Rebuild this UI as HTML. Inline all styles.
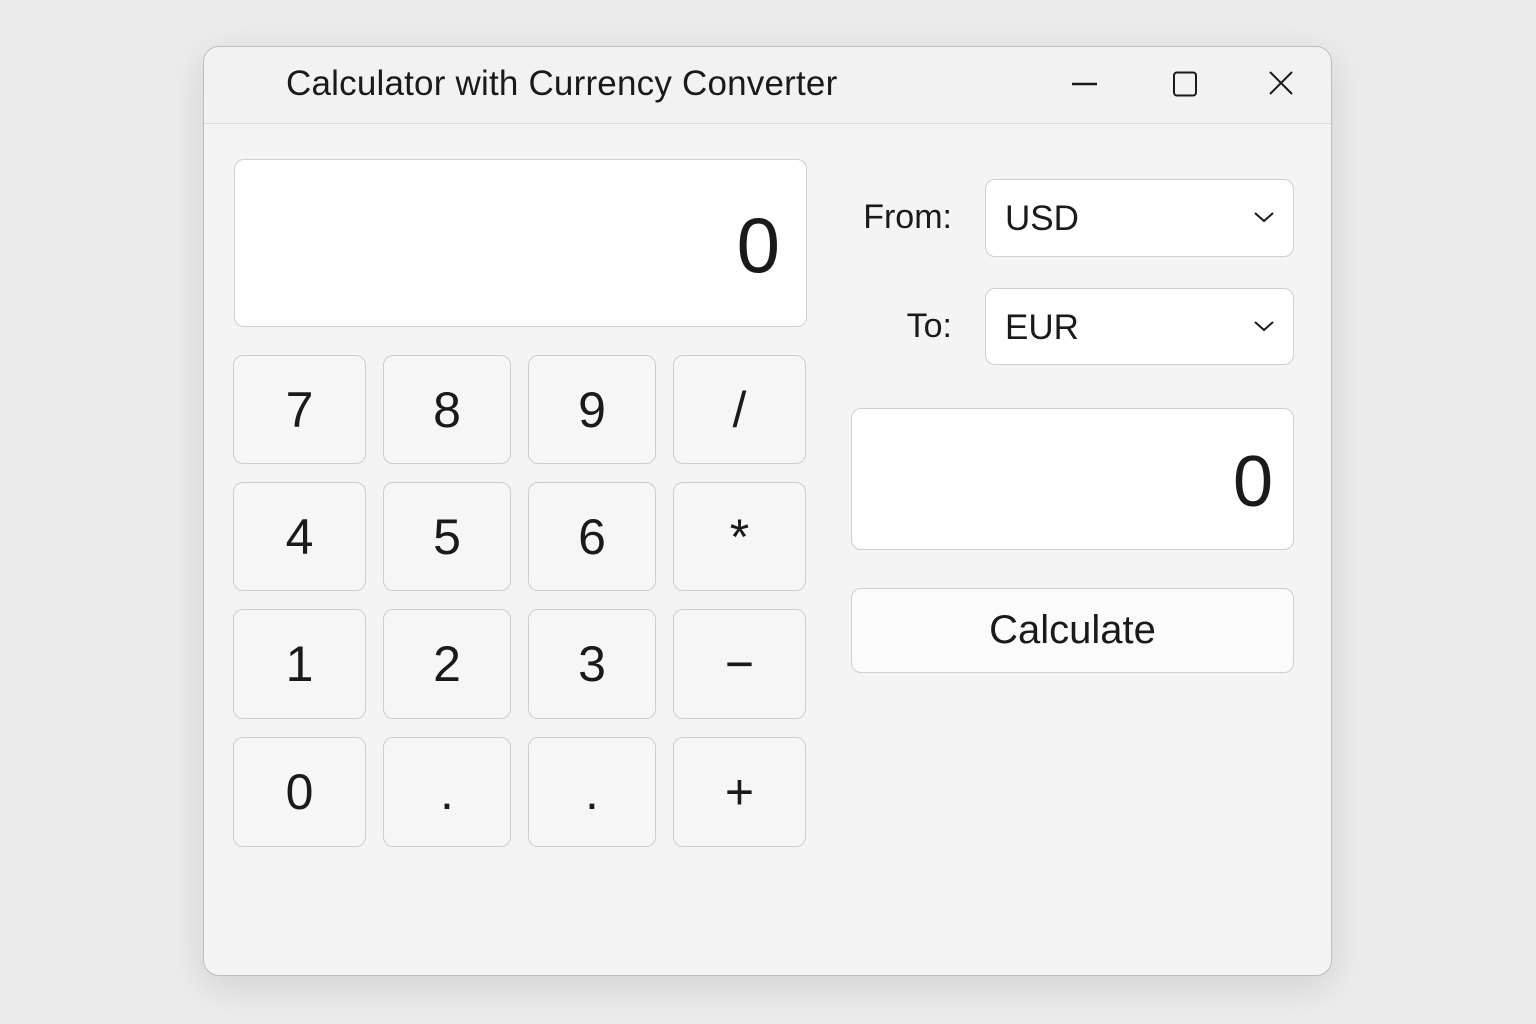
<!DOCTYPE html>
<html><head><style>
*{box-sizing:border-box;margin:0;padding:0}
body{width:1536px;height:1024px;background:#ececec;font-family:"Liberation Sans",sans-serif;color:#1a1a1a;position:relative;overflow:hidden}
.win{position:absolute;left:203px;top:46px;width:1129px;height:930px;background:#f4f4f4;border:1px solid #bdbdbd;border-radius:16px;box-shadow:0 10px 40px rgba(0,0,0,.12);overflow:hidden}
.tb{position:absolute;left:0;top:0;width:100%;height:77px;background:#f2f2f2;border-bottom:1px solid #dcdcdc}
.title{position:absolute;left:82px;top:17px;font-size:35px;letter-spacing:0.2px}
.a{position:absolute}
.box{position:absolute;background:#fff;border:1.5px solid #cfcfcf;border-radius:10px}
.k{position:absolute;background:#f6f6f6;border:1.5px solid #cdcdcd;border-radius:10px;display:flex;align-items:center;justify-content:center;font-size:50px}
.lbl{position:absolute;font-size:34px;text-align:right}
</style></head><body>
<div class="win">
 <div class="tb">
  <div class="title">Calculator with Currency Converter</div>
  <svg class="a" style="left:860px;top:22px" width="40" height="30"><line x1="8" y1="15" x2="33" y2="15" stroke="#1a1a1a" stroke-width="2.5"/></svg>
  <svg class="a" style="left:966px;top:22px" width="30" height="30"><rect x="4" y="3.5" width="22" height="23" rx="3" fill="none" stroke="#1a1a1a" stroke-width="2"/></svg>
  <svg class="a" style="left:1062px;top:22px" width="30" height="30"><path d="M4 3L26 25M26 3L4 25" stroke="#1a1a1a" stroke-width="2"/></svg>
 </div>
 <div class="box" style="left:30px;top:112px;width:573px;height:168px"><div class="a" style="right:26px;top:40px;font-size:78px">0</div></div>
</div>
<div class="k" style="left:233px;top:355px;width:133px;height:109px">7</div>
<div class="k" style="left:383px;top:355px;width:128px;height:109px">8</div>
<div class="k" style="left:528px;top:355px;width:128px;height:109px">9</div>
<div class="k" style="left:673px;top:355px;width:133px;height:109px">/</div>
<div class="k" style="left:233px;top:482px;width:133px;height:109px">4</div>
<div class="k" style="left:383px;top:482px;width:128px;height:109px">5</div>
<div class="k" style="left:528px;top:482px;width:128px;height:109px">6</div>
<div class="k" style="left:673px;top:482px;width:133px;height:109px">*</div>
<div class="k" style="left:233px;top:609px;width:133px;height:110px">1</div>
<div class="k" style="left:383px;top:609px;width:128px;height:110px">2</div>
<div class="k" style="left:528px;top:609px;width:128px;height:110px">3</div>
<div class="k" style="left:673px;top:609px;width:133px;height:110px">−</div>
<div class="k" style="left:233px;top:737px;width:133px;height:110px">0</div>
<div class="k" style="left:383px;top:737px;width:128px;height:110px">.</div>
<div class="k" style="left:528px;top:737px;width:128px;height:110px">.</div>
<div class="k" style="left:673px;top:737px;width:133px;height:110px">+</div>
<div class="lbl" style="left:840px;top:198px;width:112px">From:</div>
<div class="lbl" style="left:840px;top:307px;width:112px">To:</div>
<div class="box" style="left:985px;top:179px;width:309px;height:78px"><div class="a" style="left:19px;top:19px;font-size:35px">USD</div><svg class="a" style="left:267px;top:29px" width="22" height="16"><path d="M2 4L11 12L20 4" fill="none" stroke="#1a1a1a" stroke-width="2"/></svg></div>
<div class="box" style="left:985px;top:288px;width:309px;height:77px"><div class="a" style="left:19px;top:19px;font-size:35px">EUR</div><svg class="a" style="left:267px;top:29px" width="22" height="16"><path d="M2 4L11 12L20 4" fill="none" stroke="#1a1a1a" stroke-width="2"/></svg></div>
<div class="box" style="left:851px;top:408px;width:443px;height:142px"><div class="a" style="right:20px;top:32px;font-size:72px">0</div></div>
<div class="box" style="left:851px;top:588px;width:443px;height:85px;background:#fbfbfb;display:flex;align-items:center;justify-content:center;font-size:40px">Calculate</div>
</body></html>
